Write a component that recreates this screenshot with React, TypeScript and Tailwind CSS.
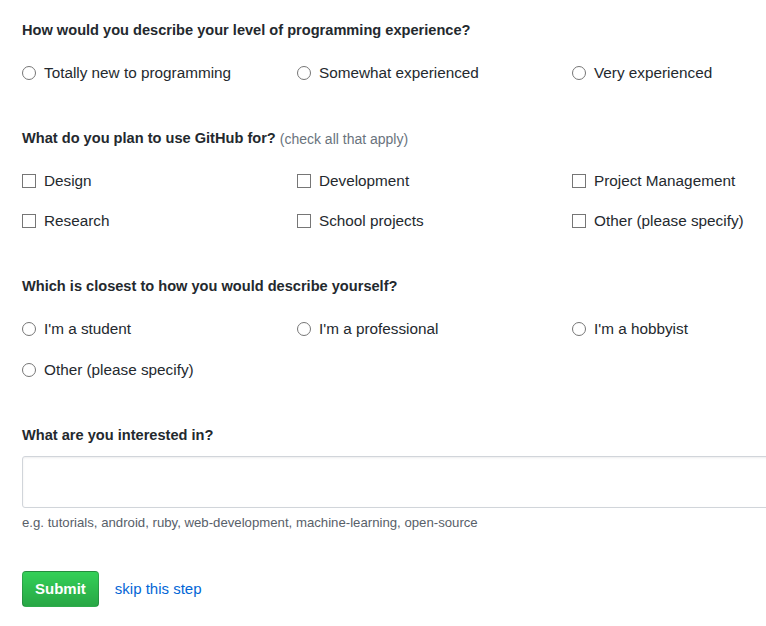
import React from 'react';

const font = { fontFamily: '"Segoe UI", "Liberation Sans", Arial, sans-serif' };

function Radio({ label }: { label: string }) {
  return (
    <label className="flex items-center h-6 text-[15.3px] text-[#24292e]">
      <span className="w-[14px] h-[14px] rounded-full border border-[#767676] bg-white mr-[8px] shrink-0" />
      {label}
    </label>
  );
}

function Check({ label }: { label: string }) {
  return (
    <label className="flex items-center h-6 text-[15.3px] text-[#24292e]">
      <span className="w-[14px] h-[14px] border border-[#767676] bg-white mr-[8px] shrink-0" />
      {label}
    </label>
  );
}

function Heading({ children }: { children: React.ReactNode }) {
  return <h3 className="h-5 flex items-center text-[14.6px] font-bold text-[#24292e]">{children}</h3>;
}

export default function App() {
  return (
    <div className="w-full min-h-screen bg-white overflow-x-hidden" style={font}>
      <div className="pl-[22px] pt-[21px] pb-[20px]">
        <Heading>How would you describe your level of programming experience?</Heading>
        <div className="grid grid-cols-[275px_275px_275px] mt-[20px]">
          <Radio label="Totally new to programming" />
          <Radio label="Somewhat experienced" />
          <Radio label="Very experienced" />
        </div>

        <div className="mt-[44px]">
          <Heading>
            What do you plan to use GitHub for?
            <span className="font-normal text-[14px] text-[#6a737d] ml-[4px]">(check all that apply)</span>
          </Heading>
        </div>
        <div className="grid grid-cols-[275px_275px_275px] gap-y-4 mt-[20px]">
          <Check label="Design" />
          <Check label="Development" />
          <Check label="Project Management" />
          <Check label="Research" />
          <Check label="School projects" />
          <Check label="Other (please specify)" />
        </div>

        <div className="mt-[44px]">
          <Heading>Which is closest to how you would describe yourself?</Heading>
        </div>
        <div className="grid grid-cols-[275px_275px_275px] gap-y-[17px] mt-[20px]">
          <Radio label="I'm a student" />
          <Radio label="I'm a professional" />
          <Radio label="I'm a hobbyist" />
          <Radio label="Other (please specify)" />
        </div>

        <div className="mt-[44px]">
          <Heading>What are you interested in?</Heading>
        </div>
        <input
          type="text"
          className="block mt-[10px] w-[800px] h-[52px] border border-[#d1d5da] rounded-[3px] bg-white shadow-[inset_0_1px_2px_rgba(27,31,35,0.075)] outline-none px-2"
        />
        <p className="mt-[7px] h-4 flex items-center text-[13.2px] text-[#586069]">
          e.g. tutorials, android, ruby, web-development, machine-learning, open-source
        </p>

        <div className="flex items-center mt-[40px]">
          <button className="h-[36px] px-[12px] rounded-[4px] border border-[rgba(27,31,35,0.2)] bg-gradient-to-b from-[#34d058] to-[#28a745] text-white text-[15px] font-bold">
            Submit
          </button>
          <a href="#" className="ml-[16px] text-[15px] text-[#0366d6]">
            skip this step
          </a>
        </div>
      </div>
    </div>
  );
}
